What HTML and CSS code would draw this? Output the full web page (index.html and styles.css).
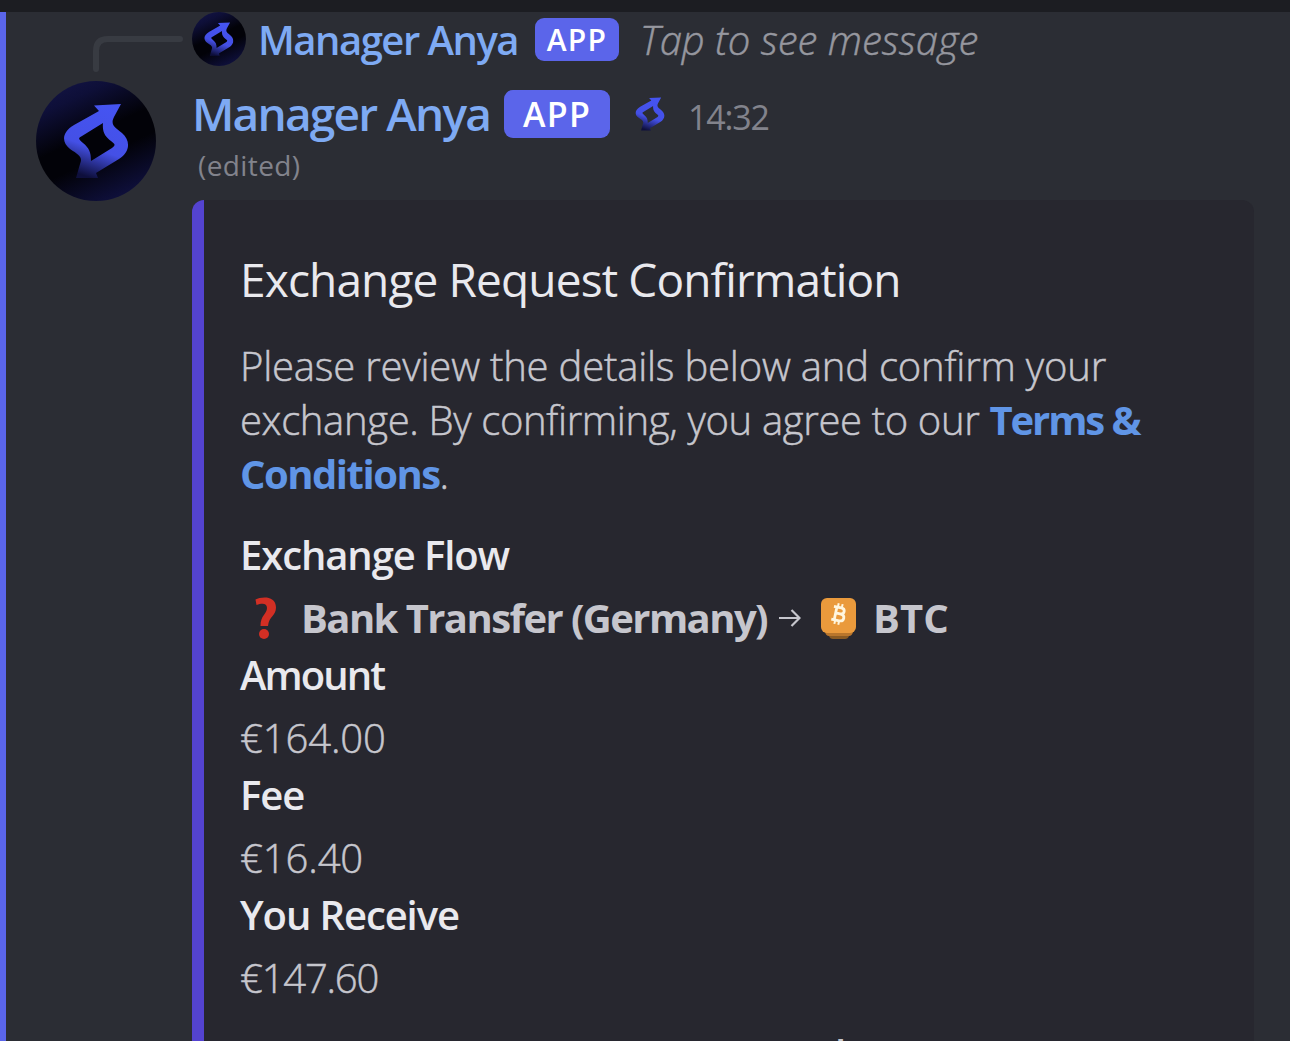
FILE: index.html
```html
<!DOCTYPE html>
<html>
<head>
	<meta charset="UTF-8">
	<title>Manager Anya</title>
	<link rel="stylesheet" href="styles.css">
</head>
<body>
	<svg width="0" height="0" class="defs">
		<linearGradient id="fade" x1="0.65" y1="0" x2="0.35" y2="1">
			<stop offset="0" stop-color="#4554f2"/>
			<stop offset="0.6" stop-color="#4450e6"/>
			<stop offset="0.98" stop-color="#0e0f3c"/>
		</linearGradient>
		<symbol id="logo" viewBox="27 21 66 76">
			<path fill="url(#fade)" fill-rule="evenodd" d="M85 22 L58 23.5 L63 29 L38 43 C26 50 25 60 34 67 C43 73 47 75 44 82 L40 96 L62 96 L60 91 L83 77 C94 70 95 59 86 51 C79 45 74 43 78 35 Z M67 41 C66 51 70 55 75 59 C79 62 80 63 76 66 L55 79 C55 70 53 66 47 61 C42 57 42 56 46 54 Z"/>
		</symbol>
	</svg>
	<div class="topbar"></div>
	<div class="message">
		<div class="side">
			<svg class="spine" width="90" height="36" viewBox="0 0 90 36"><path d="M3 33 V15 Q3 3 15 3 H87" fill="none" stroke="#383b42" stroke-width="6" stroke-linecap="round"/></svg>
			<div class="avatar"><svg class="avatar-logo"><use href="#logo"/></svg></div>
		</div>
		<div class="content">
			<div class="reply">
				<div class="avatar small"><svg class="avatar-logo"><use href="#logo"/></svg></div>
				<span class="reply-name">Manager Anya</span>
				<span class="app app-small">APP</span>
				<span class="reply-text">Tap to see message</span>
			</div>
			<div class="header">
				<span class="name">Manager Anya</span>
				<span class="app">APP</span>
				<svg class="role-icon"><use href="#logo"/></svg>
				<span class="time">14:32</span>
			</div>
			<div class="edited">(edited)</div>
			<div class="embed">
				<div class="title">Exchange Request Confirmation</div>
				<div class="desc"><span class="first">Please review the details below and confirm your</span><br>exchange. By confirming, you agree to our <a class="terms">Terms &amp;</a><br><a>Conditions</a>.</div>
				<div class="field-name">Exchange Flow</div>
				<div class="flow">
					<svg class="question" viewBox="0 0 22 42"><path d="M0.5 2.5 C6 -0.5 21 -2 21 10.5 C21 19 14 19 13 29 L5.5 29 C5.5 18 12 17 12 11 C12 6 7 6 1.5 8 Z" fill="#d22f24"/><circle cx="9" cy="37" r="5" fill="#d22f24"/></svg>
					<b class="bank">Bank Transfer (Germany)</b>
					<svg class="arrow" viewBox="0 0 22 18"><path d="M0 9 H20 M12.5 1 L20.5 9 L12.5 17" fill="none" stroke="#c6c6cd" stroke-width="2.2"/></svg>
					<svg class="coin" viewBox="0 0 36 42">
						<path d="M6 30 H30 L28 38 Q27 41 24 41 H12 Q9 41 8 38 Z" fill="#8a5a23"/>
						<path d="M2 26 H34 L32 34 Q31 38 28 38 H8 Q5 38 4 34 Z" fill="#b9762c"/>
						<rect width="35" height="35" rx="6" fill="#ea9a3c"/>
						<g transform="translate(17.5 16) rotate(12)" fill="none" stroke="#fff6df" stroke-width="2.8"><path d="M-6 -6.5 H1.5 Q5 -6.5 5 -3.5 Q5 -0.5 1.5 -0.5 H-3 M1.5 -0.5 Q6 -0.5 6 3 Q6 6.5 2 6.5 H-6 M-3 -6.5 V6.5"/><path stroke-width="2" d="M-2 -10.5 V-7 M2 -10.5 V-7 M-2 7 V10.5 M2 7 V10.5"/></g>
					</svg>
					<b class="btc">BTC</b>
				</div>
				<div class="field-name amount">Amount</div>
				<div class="value">€164.00</div>
				<div class="field-name">Fee</div>
				<div class="value">€16.40</div>
				<div class="field-name">You Receive</div>
				<div class="value total">€147.60</div>
				<div class="next">l</div>
			</div>
		</div>
	</div>
</body>
</html>
```
FILE: styles.css
```css
body {
	margin: 0;
	height: 1041px;
	overflow: hidden;
	background: #2b2d34;
	color: #c6c6cd;
	font-family: "Open Sans", sans-serif;
	font-size: 40px;
}
.defs {
	position: absolute;
}
.topbar {
	height: 12px;
	background: #1c1d22;
}
.message {
	display: flex;
	height: 1029px;
	box-sizing: border-box;
	border-left: 6px solid #5a65ea;
	overflow: hidden;
}
.side {
	width: 156px;
	margin-left: 30px;
	flex: none;
}
.spine {
	display: block;
	margin: 24px 0 9px 57px;
}
.avatar {
	width: 120px;
	height: 120px;
	border-radius: 50%;
	background: linear-gradient(155deg, #15164a 0%, #0e0f38 20%, #020208 45%, #020208 60%, #0d0e36 85%, #15164a 100%);
	display: flex;
	align-items: center;
	justify-content: center;
}
.avatar-logo {
	width: 55%;
	height: 63.3%;
}
.small {
	width: 54px;
	height: 54px;
	margin-right: 12px;
}
.content {
	width: 1062px;
	flex: none;
}
.reply {
	display: flex;
	align-items: center;
	height: 54px;
	white-space: nowrap;
}
.reply-name, .name {
	color: #7eaaf3;
	font-weight: 600;
	letter-spacing: -1.5px;
}
.app {
	width: 106px;
	height: 48px;
	line-height: 49px;
	margin-left: 14px;
	border-radius: 9px;
	background: #5b65ea;
	color: #fff;
	text-align: center;
	font-size: 34px;
	font-weight: 600;
	letter-spacing: 1.3px;
}
.app-small {
	width: 84px;
	height: 43px;
	line-height: 43px;
	margin: 1px 0 0 17px;
	font-size: 30px;
}
.reply-text {
	margin-left: 21px;
	color: #96979f;
	font-style: italic;
	font-weight: 300;
	-webkit-text-stroke: 0.5px;
}
.header {
	display: flex;
	align-items: center;
	margin-top: 18px;
	height: 60px;
}
.name {
	font-size: 46px;
	letter-spacing: -1.8px;
	margin-top: -2px;
}
.role-icon {
	width: 30px;
	height: 34px;
	margin: 0 23px 0 25px;
}
.time {
	font-size: 34px;
	letter-spacing: -1.2px;
	margin-top: 6px;
	color: #82838c;
}
.edited {
	height: 56px;
	font-size: 28px;
	line-height: 42px;
	letter-spacing: 0.4px;
	padding-left: 6px;
	box-sizing: border-box;
	color: #82838c;
}
.embed {
	height: 900px;
	box-sizing: border-box;
	background: #27272f;
	border-left: 12px solid #5443d0;
	border-radius: 12px;
	padding: 48px 0 0 36px;
	white-space: nowrap;
}
.title {
	font-size: 46px;
	line-height: 62px;
	letter-spacing: -0.87px;
	color: #e9e9ee;
	margin-bottom: 29px;
}
.desc {
	line-height: 54px;
	font-weight: 300;
	-webkit-text-stroke: 0.5px;
	letter-spacing: -0.35px;
	margin-bottom: 27px;
}
.first {
	letter-spacing: -0.2px;
}
.desc a {
	color: #6095e6;
	font-weight: 700;
	letter-spacing: -1.5px;
	-webkit-text-stroke: 0;
}
.desc .terms {
	letter-spacing: -2.1px;
}
.field-name {
	line-height: 54px;
	font-weight: 600;
	letter-spacing: -1.1px;
	color: #e9e9ee;
}
.amount {
	letter-spacing: -1.9px;
}
.flow, .value {
	height: 54px;
	line-height: 54px;
	margin: 9px 0 3px;
}
.value {
	font-weight: 300;
	-webkit-text-stroke: 0.5px;
	letter-spacing: -0.1px;
}
.total {
	letter-spacing: -1.2px;
}
.flow {
	display: flex;
	align-items: center;
}
.question {
	width: 22px;
	height: 42px;
	margin: 0 24px 0 15px;
}
.bank {
	letter-spacing: -1.57px;
}
.arrow {
	width: 22px;
	height: 18px;
	margin: 0 20px 0 12px;
}
.coin {
	width: 36px;
	height: 42px;
	margin: 2px 16px 0 0;
}
.next {
	margin-top: 22px;
	padding-left: 595px;
	line-height: 54px;
	font-weight: 600;
}
```
